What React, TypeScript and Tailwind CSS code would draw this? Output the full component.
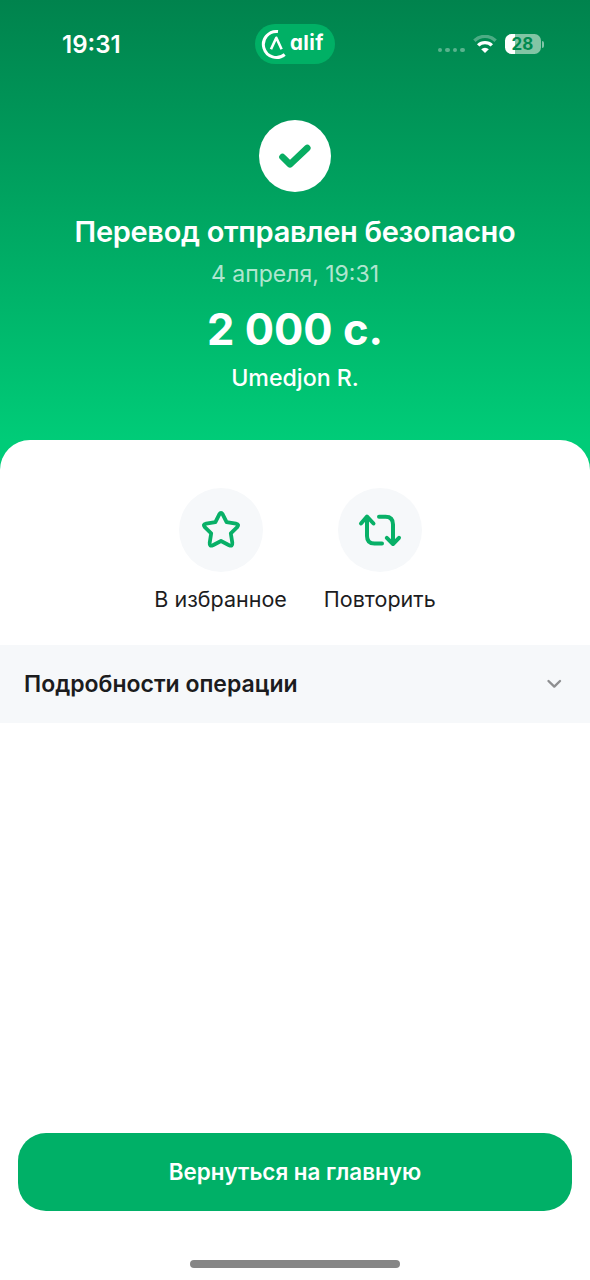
import React from "react";

const StatusBar = () => {
  return (
    <div className="grid h-[88px] grid-cols-3 items-center text-white">
      <span className="pt-px pl-[62px] text-[24px] font-semibold leading-none">19:31</span>

      <div className="flex h-10 w-20 items-center justify-self-center rounded-full bg-[#00b065] pl-[6px]">
        <svg className="h-8 w-7 shrink-0" viewBox="0 0 28 32" fill="none" stroke="currentColor" strokeLinecap="butt">
          <path d="M17 3.6A13 13 0 1 0 23.7 26.5" strokeWidth="3" />
          <path d="M10 21.2L15.3 9.8L20.6 21.2" strokeWidth="2.6" strokeLinejoin="round" />
        </svg>
        <span className="-mt-px ml-[1px] text-[20.5px] font-bold leading-none tracking-[0.4px] [font-feature-settings:'cv11','ss03']">alif</span>
      </div>

      <div className="flex items-center justify-end pr-[46px]">
        <div className="mt-3 mr-[8px] flex gap-[3px]">
          <span className="h-[4.5px] w-[4.5px] rounded-full bg-white/35" />
          <span className="h-[4.5px] w-[4.5px] rounded-full bg-white/35" />
          <span className="h-[4.5px] w-[4.5px] rounded-full bg-white/35" />
          <span className="h-[4.5px] w-[4.5px] rounded-full bg-white/35" />
        </div>
        <svg className="mr-2 h-[18px] w-6" viewBox="0 0 24 18" fill="none" stroke="currentColor">
          <path d="M1.4 5.8A15 15 0 0 1 22.6 5.8" strokeWidth="3.4" opacity="0.3" />
          <path d="M5.2 10.4A9.6 9.6 0 0 1 18.8 10.4" strokeWidth="3.4" />
          <path d="M12 18L8.2 14.2A5.4 5.4 0 0 1 15.8 14.2Z" fill="currentColor" stroke="none" />
        </svg>
        <div className="flex h-5 w-9 items-center justify-center rounded-[6.5px] bg-linear-to-r from-white from-28% to-[#82c5a5] to-28%">
          <span className="text-[17px] font-bold leading-none text-[#008a50]">28</span>
        </div>
        <span className="ml-[1.5px] h-[7px] w-[2px] rounded-r-full bg-white/50" />
      </div>
    </div>
  );
};

const Action = ({ label, children }: { label: string; children: React.ReactNode }) => {
  return (
    <div className="flex flex-col items-center">
      <div className="flex h-[84px] w-[84px] items-center justify-center rounded-full bg-[#f6f8fa] text-[#08b067]">
        {children}
      </div>
      <span className="mt-3 text-[21.5px] leading-[30px] text-[#1c1c1e]">{label}</span>
    </div>
  );
};

const App = () => {
  return (
    <div className="flex h-[1280px] w-[590px] flex-col overflow-hidden bg-white font-['Inter',sans-serif]">
      {/* Header */}
      <header className="h-[490px] shrink-0 bg-linear-to-b from-[#00834d] to-[#00cc78] to-[440px]">
        <StatusBar />
        <div className="flex flex-col items-center pt-8 text-white">
          <div className="flex h-[72px] w-[72px] items-center justify-center rounded-full bg-white">
            <svg className="h-9 w-9 text-[#08ad62]" viewBox="0 0 36 36" fill="none" stroke="currentColor">
              <path d="M5.5 19L13 26.3L30.3 10" strokeWidth="6.6" strokeLinecap="round" strokeLinejoin="round" />
            </svg>
          </div>
          <h1 className="mt-5 text-[29px] font-semibold leading-10 tracking-[-0.31px] whitespace-nowrap">
            Перевод отправлен безопасно
          </h1>
          <p className="mt-[5px] text-[23px] leading-[34px] text-white/70">4 апреля, 19:31</p>
          <p className="mt-3 text-[43.5px] font-bold leading-[52px]">2 000 с.</p>
          <p className="mt-[7px] text-[23.2px] font-medium leading-8">Umedjon R.</p>
        </div>
      </header>

      {/* Sheet */}
      <main className="-mt-[50px] flex flex-1 flex-col rounded-t-[30px] bg-white pt-12">
        <div className="flex justify-center gap-[37px]">
          <Action label="В избранное">
            <svg className="h-11 w-11" viewBox="0 0 44 44" fill="none" stroke="currentColor">
              <path
                d="M20.3 6.3Q22 3.4 23.7 6.3L27.6 14.2L36.9 15.6Q40.7 16.4 38.2 19.2L31.8 25.3L33.3 34.8Q33.7 38.8 30.1 37.3L22 33L13.9 37.3Q10.3 38.8 10.7 34.8L12.2 25.3L5.8 19.2Q3.3 16.4 7.1 15.6L16.4 14.2Z"
                strokeWidth="3.8"
                strokeLinejoin="round"
              />
            </svg>
          </Action>
          <Action label="Повторить">
            <svg className="h-11 w-11" viewBox="0 0 44 44" fill="none" stroke="currentColor">
              <g strokeWidth="4" strokeLinecap="round" strokeLinejoin="round">
                <path d="M3 15.5L9 8.5L15.5 15.5" />
                <path d="M9 9.5V28Q9 35.5 16.5 35.5H24" />
                <path d="M21 8.8H27.5Q35 8.8 35 16.5V35" />
                <path d="M28.8 29.8L35 36L41 29.8" />
              </g>
            </svg>
          </Action>
        </div>

        <div className="mt-[31px] flex h-[78px] items-center justify-between bg-[#f6f8fa] pr-7 pl-6">
          <span className="text-[23px] font-semibold leading-8 text-[#1c1c1e]">Подробности операции</span>
          <svg className="h-2.5 w-4" viewBox="0 0 16 10" fill="none" stroke="#8e8f91">
            <path d="M2.5 2L8.3 7.6L14 2" strokeWidth="2.4" strokeLinecap="round" strokeLinejoin="round" />
          </svg>
        </div>

        {/* Bottom */}
        <div className="mt-auto px-[18px]">
          <button className="h-[78px] w-full rounded-[28px] bg-[#00b067] text-[22.4px] font-semibold text-white">
            Вернуться на главную
          </button>
        </div>
        <div className="mx-auto mt-[49px] mb-3 h-2 w-[210px] rounded-full bg-[#868686]" />
      </main>
    </div>
  );
};

export default App;
